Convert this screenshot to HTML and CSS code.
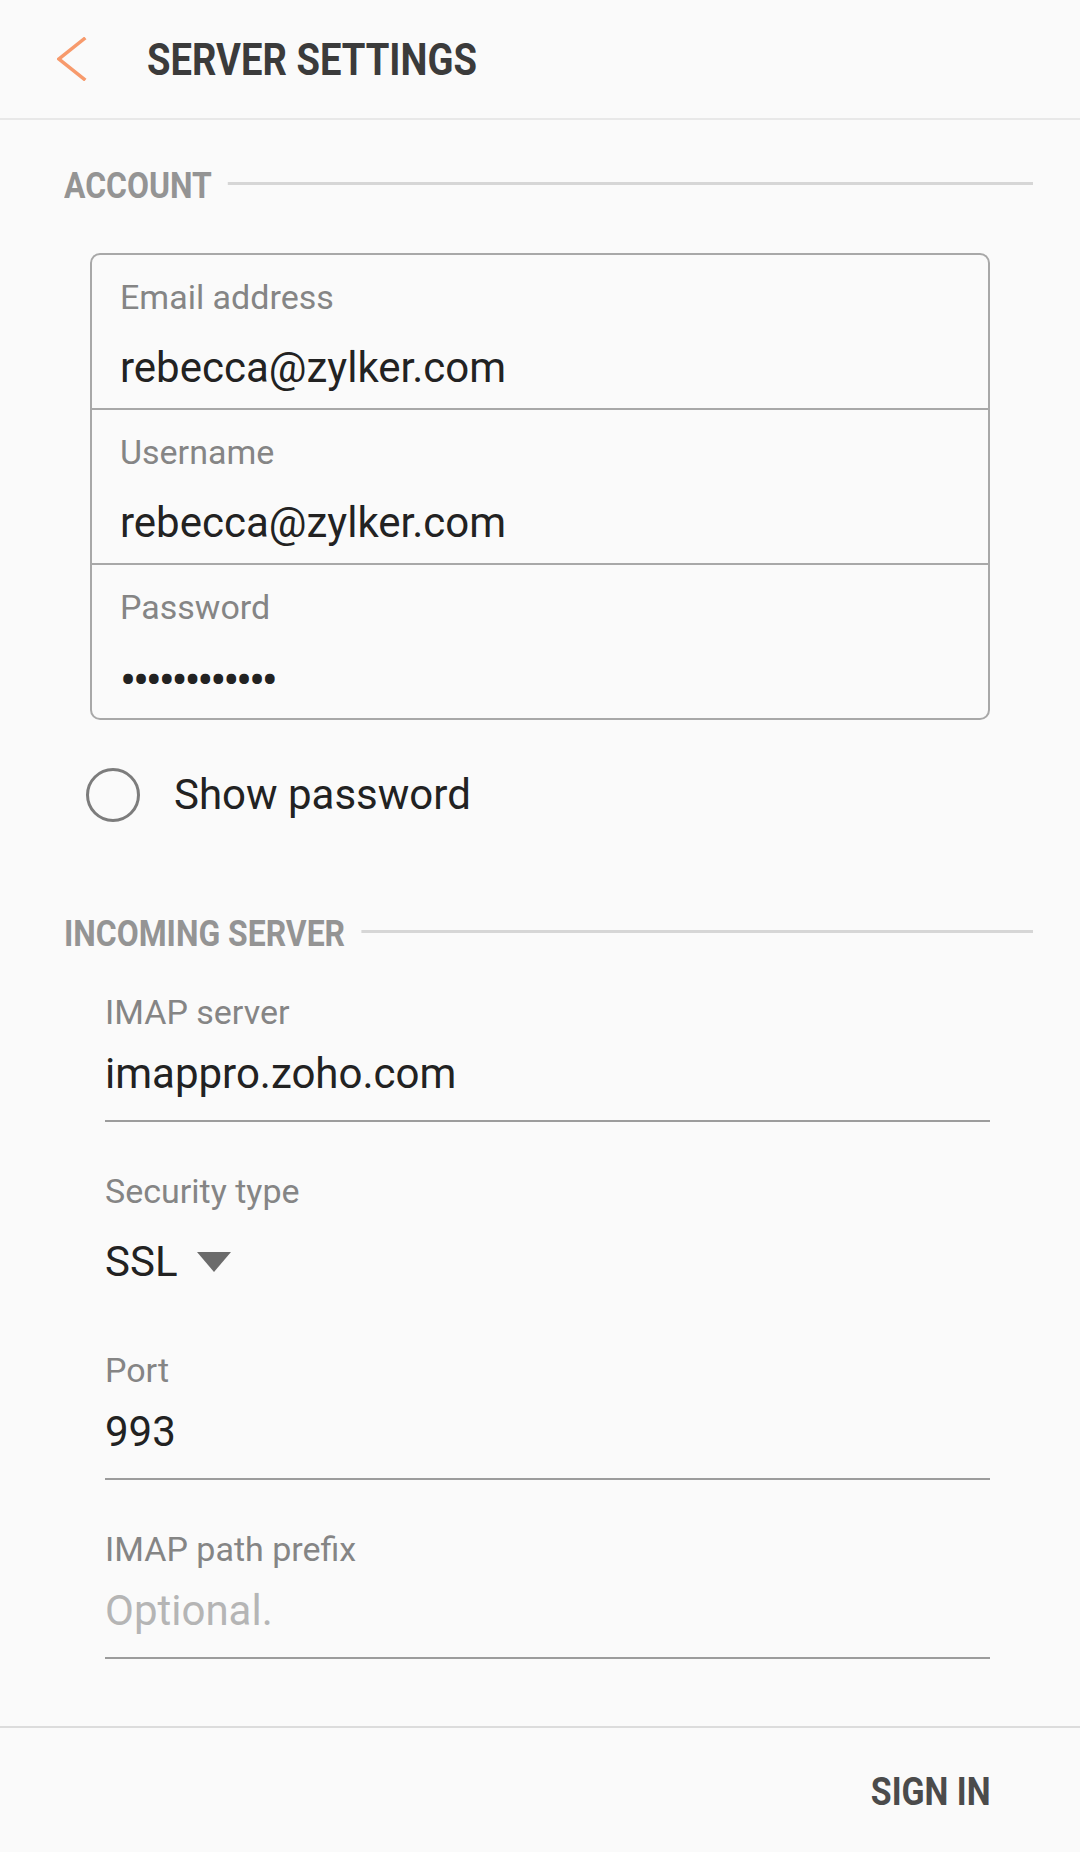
FILE: index.html
```html
<!DOCTYPE html>
<html lang="en">
<head>
<meta charset="utf-8">
<title>Server settings</title>
<link rel="stylesheet" href="styles.css">
</head>
<body>
<div class="page">
  <header class="appbar">
    <svg class="back" viewBox="0 0 30 44" aria-hidden="true"><polyline points="27,2 2,22 27,42" /></svg>
    <h1 class="title"><span class="narrow title-text">SERVER SETTINGS</span></h1>
  </header>
  <main class="content">
    <div class="section-head"><span class="narrow section-title">ACCOUNT</span></div>
    <div class="card">
      <div class="card-field">
        <div class="label">Email address</div>
        <div class="value">rebecca@zylker.com</div>
      </div>
      <div class="card-field">
        <div class="label">Username</div>
        <div class="value">rebecca@zylker.com</div>
      </div>
      <div class="card-field">
        <div class="label">Password</div>
        <div class="value dots">••••••••••••</div>
      </div>
    </div>
    <div class="check-row"><span class="radio"></span><span class="check-label">Show password</span></div>

    <div class="section-head incoming"><span class="narrow section-title">INCOMING SERVER</span></div>
    <div class="fields">
      <div class="field">
        <div class="label">IMAP server</div>
        <div class="field-value">imappro.zoho.com</div>
      </div>
      <div class="field plain">
        <div class="label">Security type</div>
        <div class="select-row"><span class="select-value">SSL</span><svg class="caret" viewBox="0 0 34 20" aria-hidden="true"><polygon points="0,0 34,0 17,20" /></svg></div>
      </div>
      <div class="field port">
        <div class="label">Port</div>
        <div class="field-value">993</div>
      </div>
      <div class="field">
        <div class="label">IMAP path prefix</div>
        <div class="field-value placeholder">Optional.</div>
      </div>
    </div>
  </main>
  <footer class="footer"><span class="narrow sign-in">SIGN IN</span></footer>
</div>
</body>
</html>
```
FILE: styles.css
```css
html, body {
  margin: 0;
  padding: 0;
}

body {
  background: #fafafa;
  font-family: Roboto, "Noto Sans", "Liberation Sans", sans-serif;
  color: #222222;
}

.page {
  display: flex;
  flex-direction: column;
  height: 1852px;
}

/* condensed bold caps (the device font is a condensed face) */
.narrow {
  display: inline-block;
  font-family: Roboto, "Noto Sans", sans-serif;
  font-weight: 700;
  transform: scaleX(0.862);
  transform-origin: left center;
}

.appbar {
  flex: none;
  height: 118px;
  border-bottom: 2px solid #e8e8e8;
  display: flex;
  align-items: center;
  padding-left: 57px;
}

.back {
  width: 30px;
  height: 44px;
  flex: none;
}

.back polyline {
  fill: none;
  stroke: #f79a6c;
  stroke-width: 3.5;
  stroke-linecap: square;
  stroke-linejoin: miter;
}

.title {
  margin: 0 0 0 60px;
  padding-top: 1px;
  font-size: 45px;
  font-weight: 700;
  line-height: 117px;
  color: #3b3b3b;
}

.title-text {
  transform: scaleX(0.848);
}

.content {
  flex: 1;
}

.section-head {
  height: 40px;
  margin-top: 46px;
  padding: 0 47px 0 64px;
  background-image: linear-gradient(#d6d6d6, #d6d6d6);
  background-repeat: no-repeat;
  background-origin: content-box;
  background-size: 100% 3px;
  background-position: 0 16px;
}

.section-head.incoming {
  margin-top: 89px;
}

.section-title {
  padding-right: 19px;
  background: #fafafa;
  font-size: 37px;
  line-height: 40px;
  color: #949494;
}

.card {
  margin: 47px 90px 0 90px;
  border: 2px solid #a8a8a8;
  border-radius: 10px;
}

.card-field {
  padding: 23px 28px 16px;
}

.card-field + .card-field {
  border-top: 2px solid #a8a8a8;
}

.label {
  font-size: 34px;
  line-height: 38px;
  color: #858585;
}

.value {
  margin-top: 28px;
  font-size: 42px;
  line-height: 48px;
  color: #222222;
}

.value.dots {
  margin-top: 31px;
  margin-bottom: -3px;
  font-size: 48px;
  letter-spacing: -3.3px;
}

.check-row {
  display: flex;
  align-items: center;
  height: 60px;
  margin-top: 45px;
  padding-left: 86px;
}

.radio {
  flex: none;
  width: 48px;
  height: 48px;
  border: 3px solid #7c7c7c;
  border-radius: 50%;
}

.check-label {
  margin-left: 34px;
  font-size: 42px;
  line-height: 60px;
  color: #222222;
}

.fields {
  padding: 0 90px 0 105px;
}

.field {
  margin-top: 50px;
  padding-bottom: 22px;
  border-bottom: 2px solid #9c9c9c;
}

.fields .field:first-child {
  margin-top: 39px;
}

.field.plain {
  padding-bottom: 0;
  border-bottom: none;
}

.field.port {
  margin-top: 65px;
}

.field-value {
  margin-top: 19px;
  font-size: 42px;
  line-height: 48px;
  color: #222222;
}

.field-value.placeholder {
  color: #b5b5b5;
}

.select-row {
  display: flex;
  align-items: center;
  margin-top: 28px;
  height: 48px;
}

.select-value {
  font-size: 42px;
  line-height: 48px;
  color: #222222;
}

.caret {
  width: 34px;
  height: 20px;
  margin-left: 19px;
}

.caret polygon {
  fill: #6b6b6b;
}

.footer {
  flex: none;
  height: 124px;
  border-top: 2px solid #dcdcdc;
  display: flex;
  justify-content: flex-end;
  align-items: flex-start;
  padding-right: 89px;
}

.sign-in {
  padding-top: 41px;
  font-size: 38px;
  line-height: 46px;
  color: #4b4b4b;
  transform: scaleX(0.89);
  transform-origin: right center;
}
```
